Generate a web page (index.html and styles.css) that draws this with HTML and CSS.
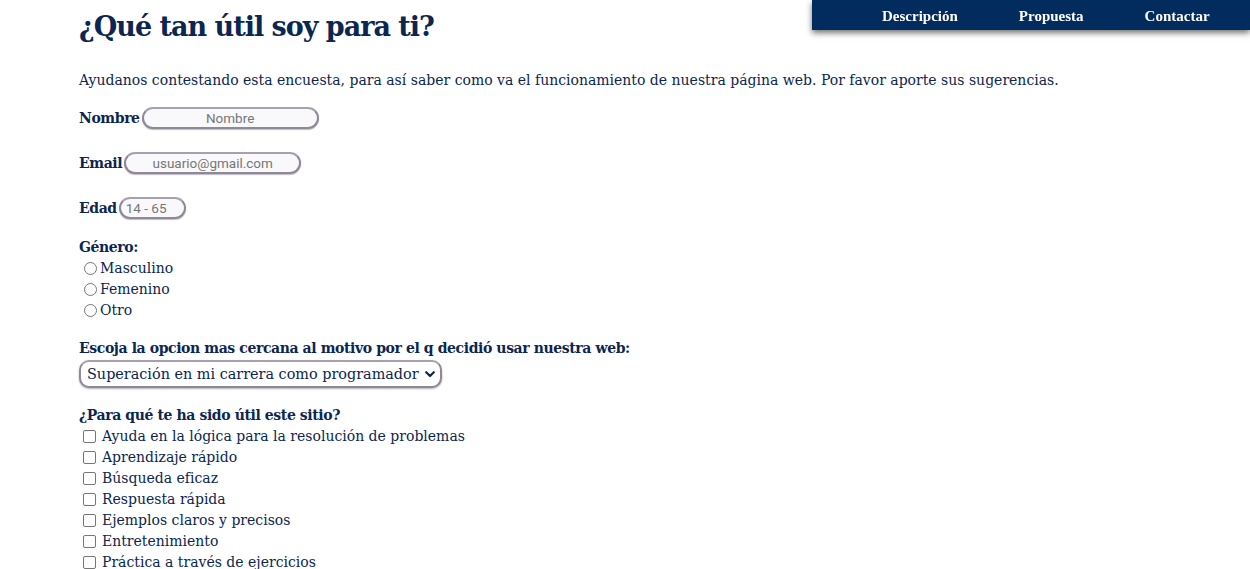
FILE: index.html
```html
<!DOCTYPE html>
<html lang="es">
<head>
<meta charset="utf-8">
<title>Encuesta</title>
<link rel="stylesheet" href="styles.css">
</head>
<body>
<nav class="topnav">
  <a href="#">Descripción</a>
  <a href="#">Propuesta</a>
  <a href="#">Contactar</a>
</nav>
<main class="page">
  <h1 class="title">¿Qué tan útil soy para ti?</h1>
  <p class="intro">Ayudanos contestando esta encuesta, para así saber como va el funcionamiento de nuestra página web. Por favor aporte sus sugerencias.</p>
  <form class="survey">
    <div class="field"><label class="lbl">Nombre</label><input class="txt txt-name" type="text" placeholder="Nombre"></div>
    <div class="field"><label class="lbl">Email</label><input class="txt txt-email" type="text" placeholder="usuario@gmail.com"></div>
    <div class="field field-last"><label class="lbl">Edad</label><input class="txt txt-age" type="text" placeholder="14 - 65"></div>
    <div class="group">
      <div class="lbl">Género:</div>
      <label class="opt radio"><span class="circle"></span>Masculino</label>
      <label class="opt radio"><span class="circle"></span>Femenino</label>
      <label class="opt radio"><span class="circle"></span>Otro</label>
    </div>
    <div class="group group-select">
      <div class="lbl">Escoja la opcion mas cercana al motivo por el q decidió usar nuestra web:</div>
      <div class="select">Superación en mi carrera como programador<svg class="chev" width="10" height="7" viewBox="0 0 10 7"><path d="M1.2 1.2 L5 5 L8.8 1.2" fill="none" stroke="#0b2650" stroke-width="2.2" stroke-linecap="round" stroke-linejoin="round"/></svg></div>
    </div>
    <div class="group group-checks">
      <div class="lbl">¿Para qué te ha sido útil este sitio?</div>
      <label class="opt check"><span class="box"></span>Ayuda en la lógica para la resolución de problemas</label>
      <label class="opt check"><span class="box"></span>Aprendizaje rápido</label>
      <label class="opt check"><span class="box"></span>Búsqueda eficaz</label>
      <label class="opt check"><span class="box"></span>Respuesta rápida</label>
      <label class="opt check"><span class="box"></span>Ejemplos claros y precisos</label>
      <label class="opt check"><span class="box"></span>Entretenimiento</label>
      <label class="opt check"><span class="box"></span>Práctica a través de ejercicios</label>
    </div>
  </form>
</main>
</body>
</html>
```
FILE: styles.css
```css
html, body {
  margin: 0;
  padding: 0;
  height: 100%;
  overflow: hidden;
  background: #fff;
}
body {
  font-family: "DejaVu Serif", "Liberation Serif", serif;
  color: #0b2650;
}
.topnav {
  position: fixed;
  top: 0;
  right: 0;
  width: 438px;
  height: 30px;
  background: #022c5e;
  box-shadow: 0 3px 6px rgba(0,0,0,0.55);
  display: flex;
  align-items: center;
  padding-left: 70px;
  box-sizing: border-box;
  gap: 61px;
}
.topnav a {
  color: #fff;
  text-decoration: none;
  font-family: "Liberation Serif", serif;
  font-weight: bold;
  font-size: 15px;
  margin-top: 3px;
}
.page {
  padding-left: 79px;
}
.title {
  margin: 0;
  padding-top: 9px;
  font-size: 27px;
  font-weight: bold;
  line-height: 36px;
  letter-spacing: -1px;
}
.intro {
  margin: 26px 0 0;
  font-size: 14px;
  line-height: 18px;
}
.survey {
  margin-top: 17px;
}
.field {
  display: flex;
  align-items: center;
  height: 24px;
  margin-bottom: 21px;
}
.field-last {
  margin-bottom: 18px;
}
.lbl {
  font-weight: bold;
  font-size: 14px;
  line-height: 18px;
  letter-spacing: -0.4px;
}
.field .lbl {
  margin-right: 2px;
}
.txt {
  height: 22px;
  box-sizing: border-box;
  border: 2px solid #8f8896;
  border-top-color: #a7a1ad;
  border-radius: 11px;
  background: #f9f9fb;
  box-shadow: 0 1px 1px rgba(70,60,80,0.35);
  font-family: Roboto, "Liberation Sans", sans-serif;
  font-size: 13.5px;
  color: #555;
  padding: 0 6px;
  outline: none;
}
.txt::placeholder {
  color: #767676;
}
.txt-name { width: 177px; text-align: center; }
.txt-email { width: 177px; text-align: center; }
.txt-age { width: 67px; text-align: left; padding-left: 5px; }
.group {
  margin-bottom: 18px;
}
.group .lbl {
  margin-bottom: 2px;
}
.group-select .lbl {
  margin-bottom: 3px;
}
.opt {
  display: flex;
  align-items: center;
  font-size: 14px;
  line-height: 21px;
  height: 21px;
  padding-left: 5px;
}
.circle {
  width: 11px;
  height: 11px;
  border: 1px solid #767676;
  border-radius: 50%;
  margin-right: 3px;
  flex: none;
}
.check {
  padding-left: 4px;
}
.box {
  width: 11px;
  height: 11px;
  border: 1px solid #767676;
  border-radius: 2px;
  margin-right: 6px;
  flex: none;
}
.select {
  display: inline-flex;
  align-items: center;
  gap: 6px;
  height: 28px;
  box-sizing: border-box;
  border: 2px solid #8f8896;
  border-top-color: #a7a1ad;
  border-radius: 10px;
  box-shadow: 0 1px 2px rgba(70,60,80,0.4);
  padding: 0 5px 0 6px;
  font-size: 14.4px;
  background: #fff;
}
.chev {
  margin-top: 1px;
}
```
